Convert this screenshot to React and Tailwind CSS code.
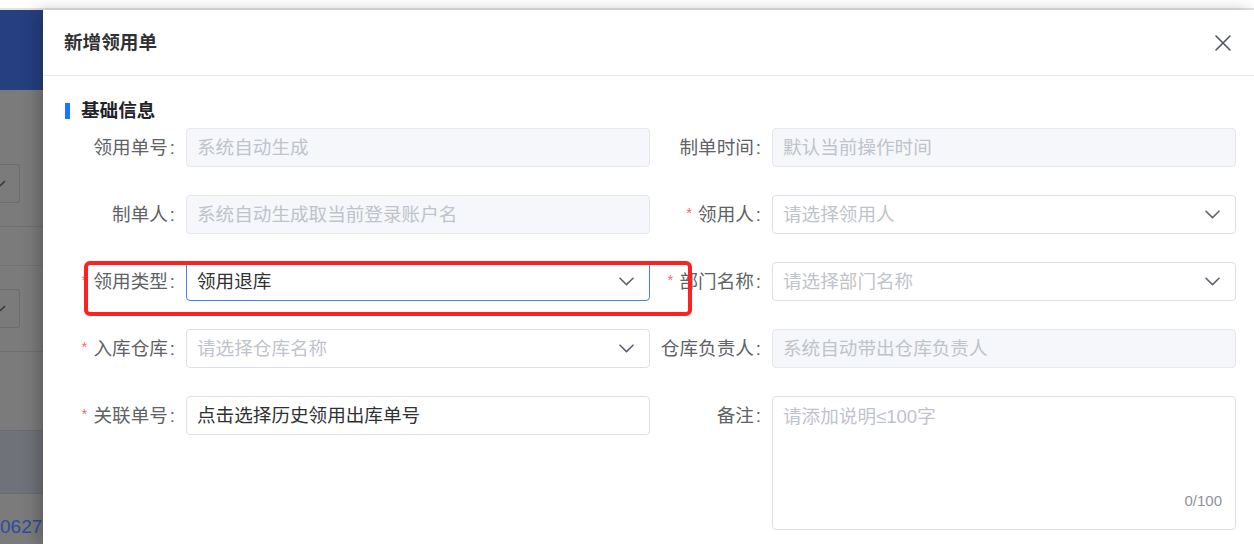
import React from "react";

const font = { fontFamily: '"Liberation Sans", "Noto Sans CJK SC", sans-serif' };

function Chevron() {
  return (
    <svg width="15" height="9" viewBox="0 0 15 9" fill="none" className="shrink-0">
      <path d="M1 1.2 L7.5 7.6 L14 1.2" stroke="#5f6370" strokeWidth="1.6" strokeLinecap="round" strokeLinejoin="round" />
    </svg>
  );
}

function Label({ text, required }) {
  return (
    <div className="w-[122px] h-[39px] pr-[11px] flex items-center justify-end shrink-0 text-[#606266] whitespace-nowrap">
      {required && <span className="text-[#f56c6c] text-[15px] mr-[6px] -mt-[3px]">*</span>}
      <span>{text}</span>
      <span className="ml-[2px]">:</span>
    </div>
  );
}

function Field({ label, required, placeholder, value, disabled, select, focused }) {
  let box = "border-[#dcdfe6] bg-white";
  if (disabled) box = "border-[#e4e7ed] bg-[#f5f7fa]";
  if (focused) box = "border-[#4080f0] bg-white";
  return (
    <div className="flex items-start">
      <Label text={label} required={required} />
      <div className={`w-[464px] h-[39px] border rounded-[4px] flex items-center pl-[10px] pr-[15px] ${box}`}>
        <span className={`flex-1 truncate ${value ? "text-[#303133]" : "text-[#bfc3cc]"}`}>
          {value || placeholder}
        </span>
        {select && <Chevron />}
      </div>
    </div>
  );
}

function Backdrop() {
  return (
    <div className="w-[43px] shrink-0 overflow-hidden flex flex-col">
      <div className="h-[80px] bg-[#253f80] shrink-0" />
      <div className="flex-1 bg-[#7b7b7b] flex flex-col">
        <div className="mt-[74px] h-[39px] w-[20px] border border-l-0 border-[#6c6c6c] rounded-r-[3px] flex items-center">
          <svg width="6" height="8" viewBox="0 0 6 8" className="mt-[1px]">
            <path d="M0 6 L5 1" stroke="#3a3a3a" strokeWidth="1.6" />
          </svg>
        </div>
        <div className="mt-[23px] h-px bg-[#6f6f6f]" />
        <div className="mt-[38px] h-px bg-[#717171]" />
        <div className="mt-[23px] h-[39px] w-[20px] border border-l-0 border-[#6c6c6c] rounded-r-[3px] flex items-center">
          <svg width="6" height="8" viewBox="0 0 6 8" className="mt-[1px]">
            <path d="M0 6 L5 1" stroke="#3a3a3a" strokeWidth="1.6" />
          </svg>
        </div>
        <div className="mt-[23px] h-px bg-[#6f6f6f]" />
        <div className="mt-[78px] h-[64px] bg-[#6f7278] border-y border-[#686b70]" />
        <div className="mt-[21px] whitespace-nowrap text-[19px] leading-[24px] text-[#2c4c9c]">0627</div>
      </div>
    </div>
  );
}

export default function App() {
  return (
    <div className="w-[1254px] h-[544px] overflow-hidden bg-white flex flex-col text-[18.6px]" style={font}>
      <div className="h-[8px] bg-white shrink-0" />
      <div className="h-[2px] bg-[#e3e3e3] shrink-0" />
      <div className="flex flex-1 min-h-0">
        <Backdrop />
        <div className="flex-1 bg-white relative z-10 shadow-[-6px_0_14px_rgba(0,0,0,0.22)] flex flex-col">
          <div className="h-[66px] border-b border-[#e4e7ed] flex items-center justify-between pl-[21px] pr-[23px] shrink-0">
            <span className="font-bold text-[#303133]">新增领用单</span>
            <svg width="16" height="16" viewBox="0 0 16 16" fill="none">
              <path d="M1 1 L15 15 M15 1 L1 15" stroke="#4b505c" strokeWidth="1.5" strokeLinecap="round" />
            </svg>
          </div>

          <div className="relative pl-[21px] pt-[23px]">
            <div className="flex items-center h-[24px] mb-[5px]">
              <div className="w-[5px] h-[16px] bg-[#1677ff] ml-[1px] mr-[11px]" />
              <span className="font-bold text-[#1f2329]">基础信息</span>
            </div>

            <div className="grid grid-cols-[586px_586px] gap-y-[28px] items-start">
              <Field label="领用单号" placeholder="系统自动生成" disabled />
              <Field label="制单时间" placeholder="默认当前操作时间" disabled />
              <Field label="制单人" placeholder="系统自动生成取当前登录账户名" disabled />
              <Field label="领用人" required placeholder="请选择领用人" select />
              <Field label="领用类型" required value="领用退库" select focused />
              <Field label="部门名称" required placeholder="请选择部门名称" select />
              <Field label="入库仓库" required placeholder="请选择仓库名称" select />
              <Field label="仓库负责人" placeholder="系统自动带出仓库负责人" disabled />
              <Field label="关联单号" required value="点击选择历史领用出库单号" />
              <div className="flex items-start">
                <Label text="备注" />
                <div className="relative w-[464px] h-[134px] border border-[#dcdfe6] rounded-[4px] pl-[10px] pt-[6px]">
                  <span className="text-[#bfc3cc]">请添加说明≤100字</span>
                  <span className="absolute right-[13px] bottom-[18px] text-[15px] leading-[20px] text-[#909399]">0/100</span>
                </div>
              </div>
            </div>

            <div className="absolute left-[41px] top-[185px] w-[608px] h-[55px] border-4 border-[#ff2020] rounded-[6px] pointer-events-none" />
          </div>
        </div>
      </div>
    </div>
  );
}
